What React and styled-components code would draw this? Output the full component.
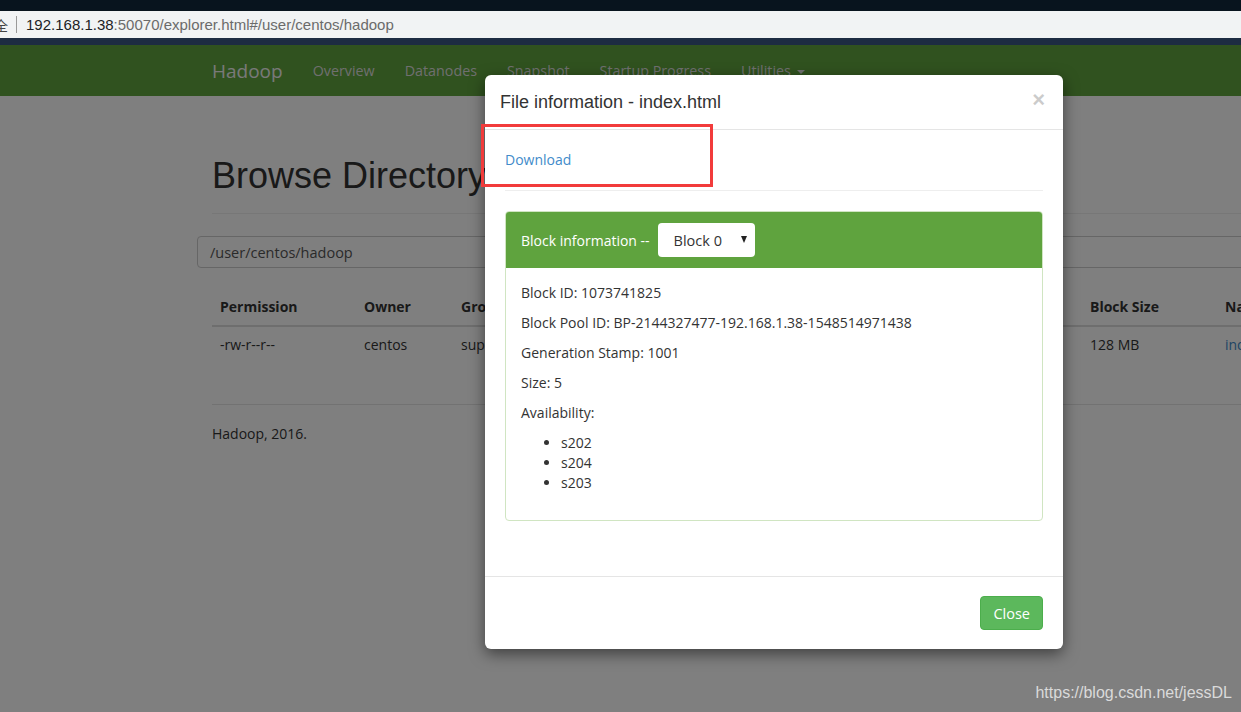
import React from "react";
import styled, { createGlobalStyle } from "styled-components";

const GlobalStyle = createGlobalStyle`
  html, body {
    margin: 0;
    padding: 0;
    overflow: hidden;
    background: #ffffff;
  }
  * { box-sizing: border-box; }
`;

const BODY_FONT = `"Open Sans", "Noto Sans", sans-serif`;
const HEAD_FONT = `"Liberation Sans", Arial, sans-serif`;

/* --- browser chrome --- */
const Chrome = styled.div`
  height: 45px;
  background: #08141e;
  padding-top: 11px;
`;

const UrlBar = styled.div`
  height: 27px;
  background: #f1f3f4;
  display: flex;
  align-items: center;
  font-family: ${HEAD_FONT};
  font-size: 15px;
  white-space: nowrap;
  overflow: hidden;
`;

const Secure = styled.span`
  font-family: "Noto Sans CJK SC", sans-serif;
  color: #444;
  margin-left: -6px;
  font-size: 14px;
`;

const Sep = styled.span`
  width: 1px;
  height: 17px;
  background: #999;
  margin: 0 9px 0 8px;
`;

const Host = styled.span`
  color: #202124;
`;

const Path = styled.span`
  color: #6b6b6b;
`;

const ChromeEdge = styled.div`
  height: 7px;
  background: #1d2c42;
`;

/* --- page --- */
const Viewport = styled.div`
  position: relative;
  height: 667px;
  overflow: hidden;
  background: #fff;
  font-family: ${BODY_FONT};
  color: #333;
`;

const Navbar = styled.div`
  height: 51px;
  background: #60a43e;
  display: flex;
  align-items: center;
  padding-left: 197px;
`;

const Brand = styled.span`
  font-size: 19px;
  color: #f2f2f2;
  padding: 0 15px;
`;

const NavLink = styled.span`
  font-size: 14.3px;
  color: #dedede;
  padding: 0 15px;
  display: flex;
  align-items: center;
  gap: 6px;
`;

const Caret = styled.span`
  width: 0;
  height: 0;
  border-left: 4px solid transparent;
  border-right: 4px solid transparent;
  border-top: 4px solid #dedede;
  margin-top: 2px;
`;

const Container = styled.div`
  padding-left: 212px;
  width: 1400px;
`;

const PageHeader = styled.h1`
  margin: 60px 0 0;
  padding-bottom: 17px;
  border-bottom: 1px solid #eee;
  font-family: ${HEAD_FONT};
  font-weight: 400;
  font-size: 36px;
  line-height: 40px;
  color: #333;
`;

const PathInput = styled.div`
  margin: 22px 0 0 -15px;
  height: 32px;
  border: 1px solid #ccc;
  border-radius: 4px;
  padding: 0 12px;
  display: flex;
  align-items: center;
  font-size: 14.5px;
  color: #555;
  width: 1200px;
`;

const Table = styled.div`
  margin-top: 21px;
  display: grid;
  grid-template-columns: 144px 97px 125px 90px 280px 134px 135px 200px;
  font-size: 14px;
`;

const Th = styled.div`
  padding: 8px;
  line-height: 20px;
  font-weight: 700;
  color: #333;
  border-bottom: 2px solid #ddd;
  white-space: nowrap;
`;

const Td = styled.div`
  padding: 8px;
  line-height: 20px;
  color: ${(p) => (p.$link ? "#428bca" : "#333")};
  white-space: nowrap;
`;

const Rule = styled.div`
  margin-top: 41px;
  border-top: 1px solid #e5e5e5;
`;

const Footer = styled.p`
  margin: 19px 0 0;
  line-height: 20px;
  font-size: 14px;
`;

/* --- modal --- */
const Backdrop = styled.div`
  position: absolute;
  inset: 0;
  background: rgba(0, 0, 0, 0.5);
`;

const Modal = styled.div`
  position: absolute;
  top: 30px;
  left: 485px;
  width: 578px;
  background: #fff;
  border-radius: 6px;
  box-shadow: 0 5px 15px rgba(0, 0, 0, 0.5);
`;

const ModalHeader = styled.div`
  padding: 15px;
  border-bottom: 1px solid #e5e5e5;
  display: flex;
  align-items: center;
  justify-content: space-between;
`;

const ModalTitle = styled.h4`
  margin: 0;
  font-family: ${HEAD_FONT};
  font-weight: 400;
  font-size: 18px;
  line-height: 24px;
  color: #333;
`;

const CloseX = styled.span`
  font-family: ${HEAD_FONT};
  font-size: 22px;
  font-weight: 700;
  line-height: 1;
  color: #000;
  opacity: 0.2;
  margin-right: 3px;
  margin-top: -4px;
`;

const ModalBody = styled.div`
  padding: 20px 20px 55px;
`;

const Link = styled.a`
  display: block;
  font-size: 14px;
  line-height: 20px;
  color: #428bca;
  text-decoration: none;
`;

const Divider = styled.div`
  margin: 20px 0;
  border-top: 1px solid #eee;
`;

const Panel = styled.div`
  border: 1px solid #d0e5c2;
  border-radius: 4px;
  overflow: hidden;
`;

const PanelHeading = styled.div`
  background: #5fa33e;
  padding: 11px 15px;
  display: flex;
  align-items: center;
  gap: 8px;
  color: #fff;
  font-size: 14px;
`;

const Select = styled.div`
  width: 97px;
  height: 34px;
  background: #fff;
  border-radius: 4px;
  color: #333;
  display: flex;
  align-items: center;
  justify-content: space-between;
  padding: 0 8px 0 16px;
  font-size: 14.5px;
`;

const SelectCaret = styled.span`
  width: 0;
  height: 0;
  border-left: 3.5px solid transparent;
  border-right: 3.5px solid transparent;
  border-top: 7px solid #222;
  margin-top: -2px;
`;

const PanelBody = styled.div`
  padding: 15px 15px 17px;
  font-size: 14px;
`;

const Line = styled.p`
  margin: 0 0 10px;
  line-height: 20px;
`;

const List = styled.ul`
  margin: 0 0 10px;
  padding-left: 40px;
  line-height: 20px;
`;

const ModalFooter = styled.div`
  border-top: 1px solid #e5e5e5;
  padding: 19px 20px;
  display: flex;
  justify-content: flex-end;
`;

const Button = styled.button`
  height: 34px;
  padding: 0 12px;
  background: #5cb85c;
  border: 1px solid #4cae4c;
  border-radius: 4px;
  color: #fff;
  font-family: ${BODY_FONT};
  font-size: 14.5px;
`;

const Annotation = styled.div`
  position: absolute;
  left: -4px;
  top: 49px;
  width: 232px;
  height: 63px;
  border: 3px solid #f23b3b;
`;

const Watermark = styled.div`
  position: absolute;
  right: 9px;
  bottom: 10px;
  font-family: ${HEAD_FONT};
  font-size: 16px;
  color: #dadada;
`;

const columns = [
  ["Permission", "-rw-r--r--"],
  ["Owner", "centos"],
  ["Group", "supergroup"],
  ["Size", "5 B"],
  ["Last Modified", "Sun Jan 27 2019"],
  ["Replication", "3"],
  ["Block Size", "128 MB"],
  ["Name", "index.html"],
];

const info = [
  "Block ID: 1073741825",
  "Block Pool ID: BP-2144327477-192.168.1.38-1548514971438",
  "Generation Stamp: 1001",
  "Size: 5",
  "Availability:",
];

export default function App() {
  return (
    <>
      <GlobalStyle />
      <Chrome>
        <UrlBar>
          <Secure>全</Secure>
          <Sep />
          <Host>192.168.1.38</Host>
          <Path>:50070/explorer.html#/user/centos/hadoop</Path>
        </UrlBar>
        <ChromeEdge />
      </Chrome>

      <Viewport>
        <Navbar>
          <Brand>Hadoop</Brand>
          <NavLink>Overview</NavLink>
          <NavLink>Datanodes</NavLink>
          <NavLink>Snapshot</NavLink>
          <NavLink>Startup Progress</NavLink>
          <NavLink>
            Utilities <Caret />
          </NavLink>
        </Navbar>

        <Container>
          <PageHeader>Browse Directory</PageHeader>
          <PathInput>/user/centos/hadoop</PathInput>
          <Table>
            {columns.map(([h]) => (
              <Th key={h}>{h}</Th>
            ))}
            {columns.map(([h, v]) => (
              <Td key={h} $link={h === "Name"}>
                {v}
              </Td>
            ))}
          </Table>
          <Rule />
          <Footer>Hadoop, 2016.</Footer>
        </Container>

        <Backdrop />

        <Modal>
          <ModalHeader>
            <ModalTitle>File information - index.html</ModalTitle>
            <CloseX>×</CloseX>
          </ModalHeader>
          <ModalBody>
            <Link href="#">Download</Link>
            <Divider />
            <Panel>
              <PanelHeading>
                Block information --
                <Select>
                  Block 0 <SelectCaret />
                </Select>
              </PanelHeading>
              <PanelBody>
                {info.map((t) => (
                  <Line key={t}>{t}</Line>
                ))}
                <List>
                  <li>s202</li>
                  <li>s204</li>
                  <li>s203</li>
                </List>
              </PanelBody>
            </Panel>
          </ModalBody>
          <ModalFooter>
            <Button>Close</Button>
          </ModalFooter>
          <Annotation />
        </Modal>

        <Watermark>https://blog.csdn.net/jessDL</Watermark>
      </Viewport>
    </>
  );
}
